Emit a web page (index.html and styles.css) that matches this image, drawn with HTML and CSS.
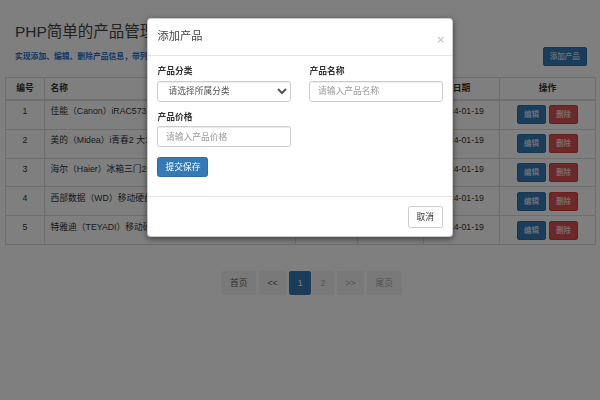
FILE: index.html
```html
<!DOCTYPE html>
<html lang="zh-CN">
<head>
<meta charset="utf-8">
<title>PHP简单的产品管理系统</title>
<link rel="stylesheet" href="styles.css">
</head>
<body>
<div class="page">
  <div class="head">
    <h3 class="title">PHP简单的产品管理系统</h3>
    <div class="bar">
      <p class="desc">实现添加、编辑、删除产品信息，带列表分页</p>
      <button class="btn btn-primary btn-sm">添加产品</button>
    </div>
  </div>

  <table class="table">
    <colgroup>
      <col class="c-id"><col class="c-name"><col class="c-price"><col class="c-cat"><col class="c-date"><col class="c-op">
    </colgroup>
    <thead>
      <tr>
        <th class="center">编号</th>
        <th>名称</th>
        <th>价格</th>
        <th>分类</th>
        <th class="center">日期</th>
        <th class="center">操作</th>
      </tr>
    </thead>
    <tbody>
      <tr>
        <td class="center">1</td>
        <td>佳能（Canon）iRAC5735 黑白复合机</td>
        <td>¥18999</td>
        <td>办公设备</td>
        <td class="center">2024-01-19</td>
        <td class="center ops"><button class="btn btn-primary btn-sm">编辑</button><button class="btn btn-danger btn-sm">删除</button></td>
      </tr>
      <tr>
        <td class="center">2</td>
        <td>美的（Midea）i青春2 大1匹 变频空调</td>
        <td>¥2399</td>
        <td>家用电器</td>
        <td class="center">2024-01-19</td>
        <td class="center ops"><button class="btn btn-primary btn-sm">编辑</button><button class="btn btn-danger btn-sm">删除</button></td>
      </tr>
      <tr>
        <td class="center">3</td>
        <td>海尔（Haier）冰箱三门216升</td>
        <td>¥1699</td>
        <td>家用电器</td>
        <td class="center">2024-01-19</td>
        <td class="center ops"><button class="btn btn-primary btn-sm">编辑</button><button class="btn btn-danger btn-sm">删除</button></td>
      </tr>
      <tr>
        <td class="center">4</td>
        <td>西部数据（WD）移动硬盘 2TB</td>
        <td>¥499</td>
        <td>电脑配件</td>
        <td class="center">2024-01-19</td>
        <td class="center ops"><button class="btn btn-primary btn-sm">编辑</button><button class="btn btn-danger btn-sm">删除</button></td>
      </tr>
      <tr>
        <td class="center">5</td>
        <td>特雅迪（TEYADI）移动硬盘 1TB</td>
        <td>¥299</td>
        <td>电脑配件</td>
        <td class="center">2024-01-19</td>
        <td class="center ops"><button class="btn btn-primary btn-sm">编辑</button><button class="btn btn-danger btn-sm">删除</button></td>
      </tr>
    </tbody>
  </table>

  <nav class="pager">
    <a class="pg dark">首页</a>
    <a class="pg dark">&lt;&lt;</a>
    <span class="pg-group">
      <a class="pg active">1</a>
      <a class="pg">2</a>
    </span>
    <a class="pg">&gt;&gt;</a>
    <a class="pg">尾页</a>
  </nav>
</div>

<div class="backdrop"></div>

<div class="modal">
  <div class="modal-header">
    <h4 class="modal-title">添加产品</h4>
    <span class="close">×</span>
  </div>
  <div class="modal-body">
    <div class="form-grid">
      <div class="form-group">
        <label class="label">产品分类</label>
        <select class="form-control select">
          <option>请选择所属分类</option>
        </select>
      </div>
      <div class="form-group">
        <label class="label">产品名称</label>
        <input class="form-control" type="text" placeholder="请输入产品名称">
      </div>
      <div class="form-group">
        <label class="label">产品价格</label>
        <input class="form-control" type="text" placeholder="请输入产品价格">
      </div>
    </div>
    <button class="btn btn-primary btn-submit">提交保存</button>
  </div>
  <div class="modal-footer">
    <button class="btn btn-default">取消</button>
  </div>
</div>
</body>
</html>
```

FILE: styles.css
```css
* { box-sizing: border-box; }

html, body {
  margin: 0;
  padding: 0;
}

body {
  width: 600px;
  height: 400px;
  overflow: hidden;
  background: #fff;
  color: #333;
  font-family: "Liberation Sans", "Noto Sans CJK SC", sans-serif;
  font-size: 8.75px;
  line-height: 12.5px;
}

.page {
  padding: 0 5px;
}

.head {
  padding: 23px 8px 0 10px;
}

.title {
  margin: 0;
  font-size: 15.5px;
  line-height: 17.6px;
  font-weight: normal;
  color: #444;
}

.bar {
  margin-top: 6.4px;
  height: 18.4px;
  display: flex;
  align-items: center;
  justify-content: space-between;
}

.desc {
  margin: 0;
  font-size: 7.8px;
  line-height: 11px;
  font-weight: bold;
  color: #2b6fc8;
}

.btn {
  display: inline-block;
  margin: 0;
  border: 1px solid transparent;
  border-radius: 2.5px;
  font-family: inherit;
  font-size: 8.75px;
  line-height: 12.5px;
  padding: 3.75px 7.5px;
  cursor: pointer;
  white-space: nowrap;
}

.btn-sm {
  font-size: 7.5px;
  line-height: 11px;
  padding: 3px 6.25px;
  border-radius: 2px;
}

.btn-primary {
  color: #fff;
  background: #337ab7;
  border-color: #2e6da4;
}

.btn-danger {
  color: #fff;
  background: #d9534f;
  border-color: #d43f3a;
}

.btn-default {
  color: #333;
  background: #fff;
  border-color: #ccc;
}

/* table */
.table {
  margin-top: 12px;
  width: 100%;
  table-layout: fixed;
  border-collapse: collapse;
  border: 1px solid #ddd;
}

.c-id { width: 39px; }
.c-name { width: 251px; }
.c-price { width: 62px; }
.c-cat { width: 66px; }
.c-date { width: 76px; }
.c-op { width: 96px; }

.table th,
.table td {
  border: 1px solid #ddd;
  text-align: left;
  vertical-align: top;
  white-space: nowrap;
  overflow: hidden;
}

.table th {
  padding: 4px 5.6px;
  font-weight: bold;
  border-bottom-width: 2px;
}

.table td {
  padding: 4.4px 5.6px;
  height: 28.9px;
}

.table .center {
  text-align: center;
}

.ops {
  font-size: 0;
}

.ops .btn + .btn {
  margin-left: 2.4px;
}

/* pagination */
.pager {
  margin-top: 26px;
  padding-left: 23px;
  display: flex;
  justify-content: center;
  gap: 3px;
}

.pg-group {
  display: flex;
  gap: 1px;
}

.pg {
  display: block;
  height: 24px;
  padding: 0 8.5px;
  line-height: 24px;
  background: #f3f3f3;
  border-radius: 2px;
  color: #aaa;
}

.pg.dark {
  color: #666;
}

.pg.active {
  background: #337ab7;
  color: #fff;
}

/* modal */
.backdrop {
  position: fixed;
  inset: 0;
  background: rgba(0, 0, 0, 0.5);
}

.modal {
  position: absolute;
  left: 147px;
  top: 18.3px;
  width: 306px;
  background: #fff;
  border: 1px solid rgba(0, 0, 0, 0.2);
  border-radius: 4px;
  box-shadow: 0 2px 6px rgba(0, 0, 0, 0.5);
}

.modal-header {
  display: flex;
  justify-content: space-between;
  align-items: flex-start;
  padding: 9px 9.4px;
  border-bottom: 1px solid #e5e5e5;
}

.modal-title {
  margin: 0;
  font-size: 11.25px;
  line-height: 16px;
  font-weight: normal;
  color: #444;
}

.close {
  margin-top: 4.5px;
  margin-right: -2px;
  font-size: 13px;
  line-height: 13px;
  font-weight: bold;
  color: #000;
  opacity: 0.2;
}

.modal-body {
  padding: 9.4px;
}

.form-grid {
  display: grid;
  grid-template-columns: 1fr 1fr;
  column-gap: 18.8px;
}

.form-group {
  margin-bottom: 9.3px;
}

.label {
  display: block;
  margin-bottom: 3px;
  font-weight: bold;
  color: #333;
}

.form-control {
  display: block;
  width: 100%;
  height: 21px;
  padding: 3.75px 7.5px;
  font-family: inherit;
  font-size: 8.75px;
  line-height: 12.5px;
  color: #555;
  background: #fff;
  border: 1px solid #ccc;
  border-radius: 2.5px;
  box-shadow: inset 0 1px 1px rgba(0, 0, 0, 0.075);
}

.form-control::placeholder {
  color: #999;
}

.select {
  padding: 0 4px 0 6px;
}

.btn-submit {
  height: 20px;
  padding: 3.25px 7px;
  margin-bottom: 9.6px;
}

.modal-footer {
  display: flex;
  justify-content: flex-end;
  padding: 9.4px 9.4px 8.8px;
  border-top: 1px solid #e5e5e5;
}

.modal-footer .btn {
  height: 21.5px;
  padding: 3.75px 7.5px;
}
```
